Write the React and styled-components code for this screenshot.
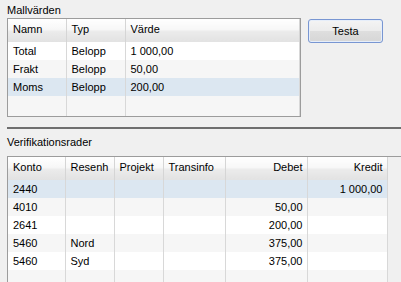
import React from 'react';
import styled, { createGlobalStyle } from 'styled-components';

const GlobalStyle = createGlobalStyle`
  html, body {
    margin: 0;
    padding: 0;
    background: #f0f0f0;
    overflow: hidden;
  }
  body {
    font-family: "Liberation Sans", Arial, sans-serif;
    font-size: 11px;
    color: #000;
  }
`;

const templateColumns = [
  { key: 'namn', title: 'Namn', width: 58 },
  { key: 'typ', title: 'Typ', width: 59 },
  { key: 'varde', title: 'Värde' },
];

const templateRows = [
  { namn: 'Total', typ: 'Belopp', varde: '1 000,00' },
  { namn: 'Frakt', typ: 'Belopp', varde: '50,00' },
  { namn: 'Moms', typ: 'Belopp', varde: '200,00', selected: true },
];

const lineColumns = [
  { key: 'konto', title: 'Konto', width: 57 },
  { key: 'resenh', title: 'Resenh', width: 49 },
  { key: 'projekt', title: 'Projekt', width: 49 },
  { key: 'transinfo', title: 'Transinfo', width: 62 },
  { key: 'debet', title: 'Debet', width: 82, right: true },
  { key: 'kredit', title: 'Kredit', width: 80, right: true },
];

const lineRows = [
  { konto: '2440', kredit: '1 000,00', selected: true },
  { konto: '4010', debet: '50,00' },
  { konto: '2641', debet: '200,00' },
  { konto: '5460', resenh: 'Nord', debet: '375,00' },
  { konto: '5460', resenh: 'Syd', debet: '375,00' },
];

function DataGrid({ columns, rows, tableWidth, fillHeight }) {
  return (
    <Table style={{ width: tableWidth }}>
      <colgroup>
        {columns.map((c) => (
          <col key={c.key} style={c.width ? { width: c.width } : undefined} />
        ))}
      </colgroup>
      <thead>
        <tr>
          {columns.map((c) => (
            <HeadCell key={c.key} $right={c.right}>
              {c.title}
            </HeadCell>
          ))}
        </tr>
      </thead>
      <tbody>
        {rows.map((r, i) => (
          <Row key={i} $selected={r.selected} $alt={i % 2 === 1}>
            {columns.map((c) => (
              <Cell key={c.key} $right={c.right}>
                {r[c.key] || ''}
              </Cell>
            ))}
          </Row>
        ))}
        <NewRow $height={fillHeight}>
          {columns.map((c) => (
            <Cell key={c.key} />
          ))}
        </NewRow>
      </tbody>
    </Table>
  );
}

export default function App() {
  return (
    <Page>
      <GlobalStyle />
      <TopSection>
        <Group>
          <Caption>Mallvärden</Caption>
          <TemplateBox>
            <DataGrid
              columns={templateColumns}
              rows={templateRows}
              tableWidth="100%"
              fillHeight={20}
            />
          </TemplateBox>
        </Group>
        <Button>Testa</Button>
      </TopSection>
      <Splitter />
      <Caption $spaced>Verifikationsrader</Caption>
      <LinesBox>
        <DataGrid
          columns={lineColumns}
          rows={lineRows}
          tableWidth={379}
          fillHeight={18}
        />
      </LinesBox>
    </Page>
  );
}

const Page = styled.div`
  padding: 4px 0 0 7px;
`;

const TopSection = styled.div`
  display: flex;
  align-items: flex-start;
  gap: 7px;
`;

const Group = styled.div`
  display: flex;
  flex-direction: column;
`;

const Caption = styled.div`
  line-height: 13px;
  height: 13px;
  margin-top: ${(p) => (p.$spaced ? '7px' : '0')};
  margin-bottom: ${(p) => (p.$spaced ? '7px' : '1px')};
`;

const GridFrame = styled.div`
  border: 1px solid #9c9c9c;
  box-sizing: border-box;
  background: #f0f0f0;
  overflow: hidden;
`;

const TemplateBox = styled(GridFrame)`
  width: 294px;
  height: 99px;
`;

const LinesBox = styled(GridFrame)`
  height: 140px;
  border-right: none;
`;

const Table = styled.table`
  border-collapse: collapse;
  table-layout: fixed;
`;

const HeadCell = styled.th`
  height: 23px;
  padding: 4px 4px 0 5px;
  font-weight: normal;
  text-align: ${(p) => (p.$right ? 'right' : 'left')};
  vertical-align: top;
  box-sizing: border-box;
  line-height: 13px;
  background: linear-gradient(#ffffff 0%, #f7f7f7 45%, #ebebeb 55%, #e2e2e2 100%);
  border-right: 1px solid #d5d5d5;
  white-space: nowrap;
  overflow: hidden;
`;

const Row = styled.tr`
  background: ${(p) => (p.$selected ? '#dce7f1' : p.$alt ? '#f6f6f6' : '#ffffff')};
`;

const NewRow = styled.tr`
  background: #f6f6f6;
  height: ${(p) => p.$height}px;
`;

const Cell = styled.td`
  height: 18px;
  padding: 0 4px 0 5px;
  line-height: 13px;
  text-align: ${(p) => (p.$right ? 'right' : 'left')};
  border-right: 1px solid #d8d8d8;
  white-space: nowrap;
  overflow: hidden;
`;

const Splitter = styled.div`
  height: 2px;
  background: #6e6e6e;
  margin-top: 10px;
`;

const Button = styled.button`
  margin-top: 15px;
  width: 75px;
  height: 24px;
  border: 1px solid #7896d2;
  border-radius: 3px;
  background: linear-gradient(#f4f4f4 0%, #ececec 48%, #dedede 52%, #d6d6d6 100%);
  box-shadow: inset 0 0 0 1px #e6eefa;
  font-family: "Liberation Sans", Arial, sans-serif;
  font-size: 11px;
  color: #000;
  padding: 0;
`;
